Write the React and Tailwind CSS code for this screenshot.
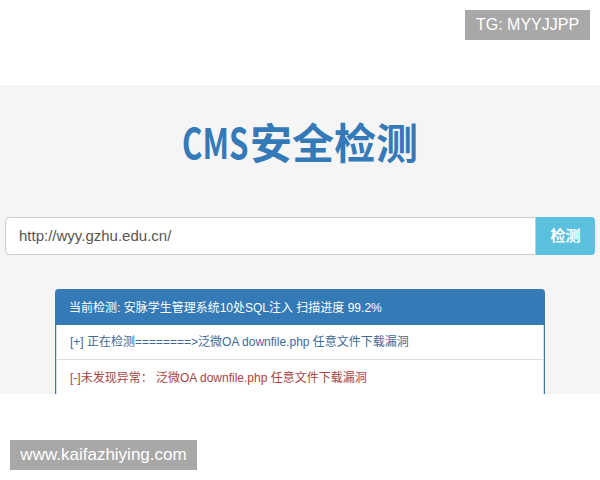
export default function App() {
  const font = { fontFamily: '"Liberation Sans", "Noto Sans CJK SC", sans-serif' };
  return (
    <div className="relative w-[600px] h-[480px] bg-white overflow-hidden" style={font}>
      <div className="h-[85px]" />
      <div className="h-[309px] bg-[#f5f5f5] overflow-hidden">
        <h1
          className="pt-[27px] h-[132px] flex justify-center text-[42px] leading-[58px] font-semibold text-[#3479b8]"
          style={{ fontFamily: '"Noto Sans CJK SC", sans-serif' }}
        >
          <span className="inline-block w-[68px] whitespace-nowrap">
            <span className="inline-block scale-x-[0.74] origin-left font-bold">CMS</span>
          </span>
          <span>安全检测</span>
        </h1>
        <div className="flex px-[5px]">
          <div className="flex-1 h-[38px] flex items-center px-[13px] bg-white border border-[#ccc] rounded-l-[4px] text-[15px] text-[#555]">
            http://wyy.gzhu.edu.cn/
          </div>
          <button className="w-[59px] h-[38px] rounded-r-[4px] bg-[#5bc0de] text-white text-[15px] font-bold">
            检测
          </button>
        </div>
        <div className="mx-[55px] mt-[34px] rounded-t-[4px] border border-[#337ab7] border-b-0 bg-white text-[12px]">
          <div className="h-[35px] px-[13px] flex items-center bg-[#337ab7] text-white">
            当前检测: 安脉学生管理系统10处SQL注入 扫描进度 99.2%
          </div>
          <div className="h-[35px] px-[13px] flex items-center border-b border-x border-[#ddd] text-[#3d6a96] whitespace-pre">
            [+] 正在检测========&gt;泛微OA downfile.php 任意文件下载漏洞
          </div>
          <div className="h-[36px] px-[13px] flex items-center border-b border-x border-[#ddd] text-[#a94442] whitespace-pre">
            [-]未发现异常： 泛微OA downfile.php 任意文件下载漏洞
          </div>
        </div>
      </div>
      <div className="absolute left-[465px] top-[10px] w-[125px] h-[30px] bg-[#a8a8a8] text-white text-[16px] flex items-center justify-center">
        TG: MYYJJPP
      </div>
      <div className="absolute left-[10px] top-[440px] w-[187px] h-[30px] bg-[#a8a8a8] text-white text-[17px] flex items-center justify-center">
        www.kaifazhiying.com
      </div>
    </div>
  );
}
